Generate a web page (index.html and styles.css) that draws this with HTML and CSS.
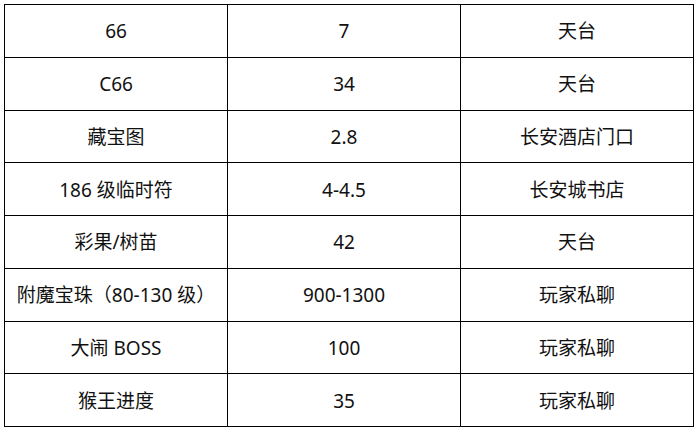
FILE: index.html
```html
<!DOCTYPE html>
<html lang="zh-CN">
<head>
<meta charset="utf-8">
<link rel="stylesheet" href="styles.css">
</head>
<body>
<div class="wrap">
<table class="price-table">
<colgroup><col class="c1"><col class="c2"><col class="c3"></colgroup>
<tbody>
<tr><td>66</td><td>7</td><td>天台</td></tr>
<tr><td>C66</td><td>34</td><td>天台</td></tr>
<tr><td>藏宝图</td><td>2.8</td><td>长安酒店门口</td></tr>
<tr><td>186 级临时符</td><td>4-4.5</td><td>长安城书店</td></tr>
<tr><td>彩果/树苗</td><td>42</td><td>天台</td></tr>
<tr><td>附魔宝珠（80-130 级）</td><td>900-1300</td><td>玩家私聊</td></tr>
<tr><td>大闹 BOSS</td><td>100</td><td>玩家私聊</td></tr>
<tr><td>猴王进度</td><td>35</td><td>玩家私聊</td></tr>
</tbody>
</table>
</div>
</body>
</html>
```
FILE: styles.css
```css
html, body {
  margin: 0;
  padding: 0;
  background: #fff;
}
.wrap {
  padding: 4px 0 0 4px;
}
.price-table {
  border-collapse: collapse;
  table-layout: fixed;
  width: 689px;
  font-family: "Noto Sans", "Noto Sans CJK SC", sans-serif;
  font-size: 19px;
  color: #111;
}
.c1 { width: 223px; }
.c2 { width: 233px; }
.c3 { width: 233px; }
.price-table td {
  border: 1px solid #000;
  height: 49.75px;
  padding: 2px 0 0;
  text-align: center;
  vertical-align: middle;
  line-height: 1;
  white-space: nowrap;
}
```
